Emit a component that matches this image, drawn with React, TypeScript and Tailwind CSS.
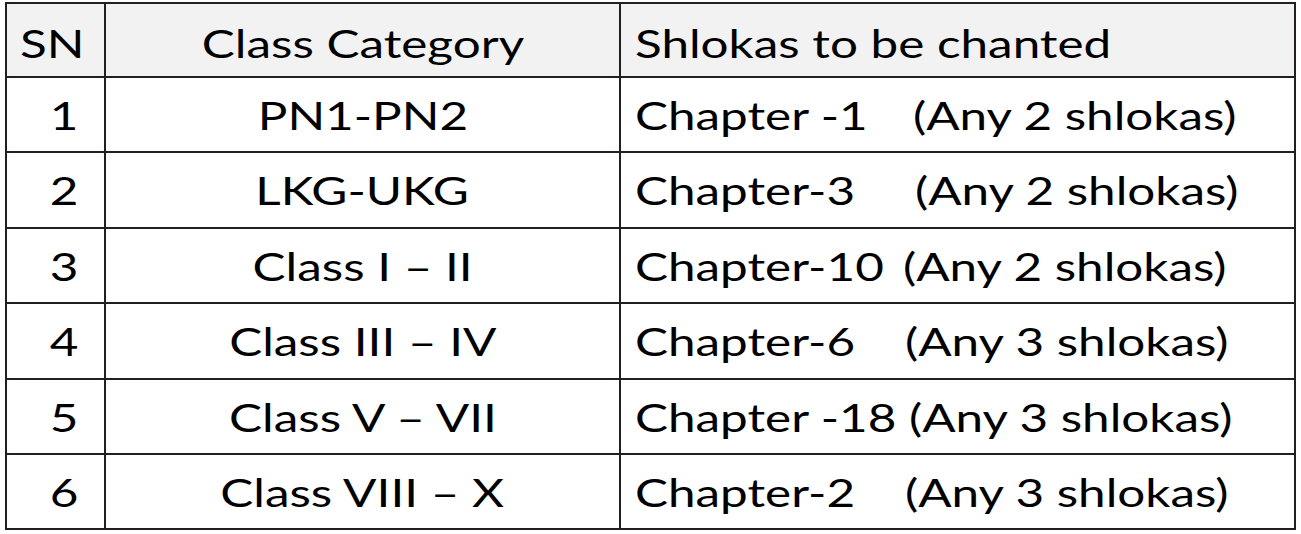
const rows = [
  { sn: "1", cls: "PN1-PN2", chapter: "Chapter -1", shlokas: "(Any 2 shlokas)", gap: "w-[278px]", h: "h-[75px] border-b-2" },
  { sn: "2", cls: "LKG-UKG", chapter: "Chapter-3", shlokas: "(Any 2 shlokas)", gap: "w-[280px]", h: "h-[76px] border-b-2" },
  { sn: "3", cls: "Class I \u2013 II", chapter: "Chapter-10", shlokas: "(Any 2 shlokas)", gap: "w-[268px]", h: "h-[75px] border-b-2" },
  { sn: "4", cls: "Class III \u2013 IV", chapter: "Chapter-6", shlokas: "(Any 3 shlokas)", gap: "w-[270px]", h: "h-[76px] border-b-2" },
  { sn: "5", cls: "Class V \u2013 VII", chapter: "Chapter -18", shlokas: "(Any 3 shlokas)", gap: "w-[274px]", h: "h-[75px] border-b-2" },
  { sn: "6", cls: "Class VIII \u2013 X", chapter: "Chapter-2", shlokas: "(Any 3 shlokas)", gap: "w-[270px]", h: "h-[73px]" },
];

// the source picture is stretched sideways, so every text run gets scale-x
const txt = "block whitespace-pre leading-none scale-x-[1.3]";

export default function App() {
  return (
    <div className="min-h-screen bg-white pl-[5px] pt-[2px] font-[Lato,sans-serif] text-[38px] text-black">
      <div className="w-[1291px] border-2 border-[#231f20]">
        <div className="grid h-[74px] grid-cols-[99px_515px_1fr] border-b-2 border-[#231f20] bg-[#f2f2f2]">
          <div className="flex items-center border-r-2 border-[#231f20] pl-[13px] pt-[5px]">
            <span className={`${txt} origin-left`}>SN</span>
          </div>
          <div className="flex items-center justify-center border-r-2 border-[#231f20] pt-[5px]">
            <span className={`${txt} origin-center`}>Class Category</span>
          </div>
          <div className="flex items-center pl-[14px] pt-[5px]">
            <span className={`${txt} origin-left`}>Shlokas to be chanted</span>
          </div>
        </div>

        {rows.map((r) => (
          <div key={r.sn} className={`grid grid-cols-[99px_515px_1fr] border-[#231f20] ${r.h}`}>
            <div className="flex items-center justify-center border-r-2 border-[#231f20] pl-[17px]">
              <span className={`${txt} origin-center`}>{r.sn}</span>
            </div>
            <div className="flex items-center justify-center border-r-2 border-[#231f20]">
              <span className={`${txt} origin-center`}>{r.cls}</span>
            </div>
            <div className="flex items-center pl-[14px]">
              <div className={`shrink-0 ${r.gap}`}>
                <span className={`${txt} origin-left`}>{r.chapter}</span>
              </div>
              <span className={`${txt} origin-left`}>{r.shlokas}</span>
            </div>
          </div>
        ))}
      </div>
    </div>
  );
}
